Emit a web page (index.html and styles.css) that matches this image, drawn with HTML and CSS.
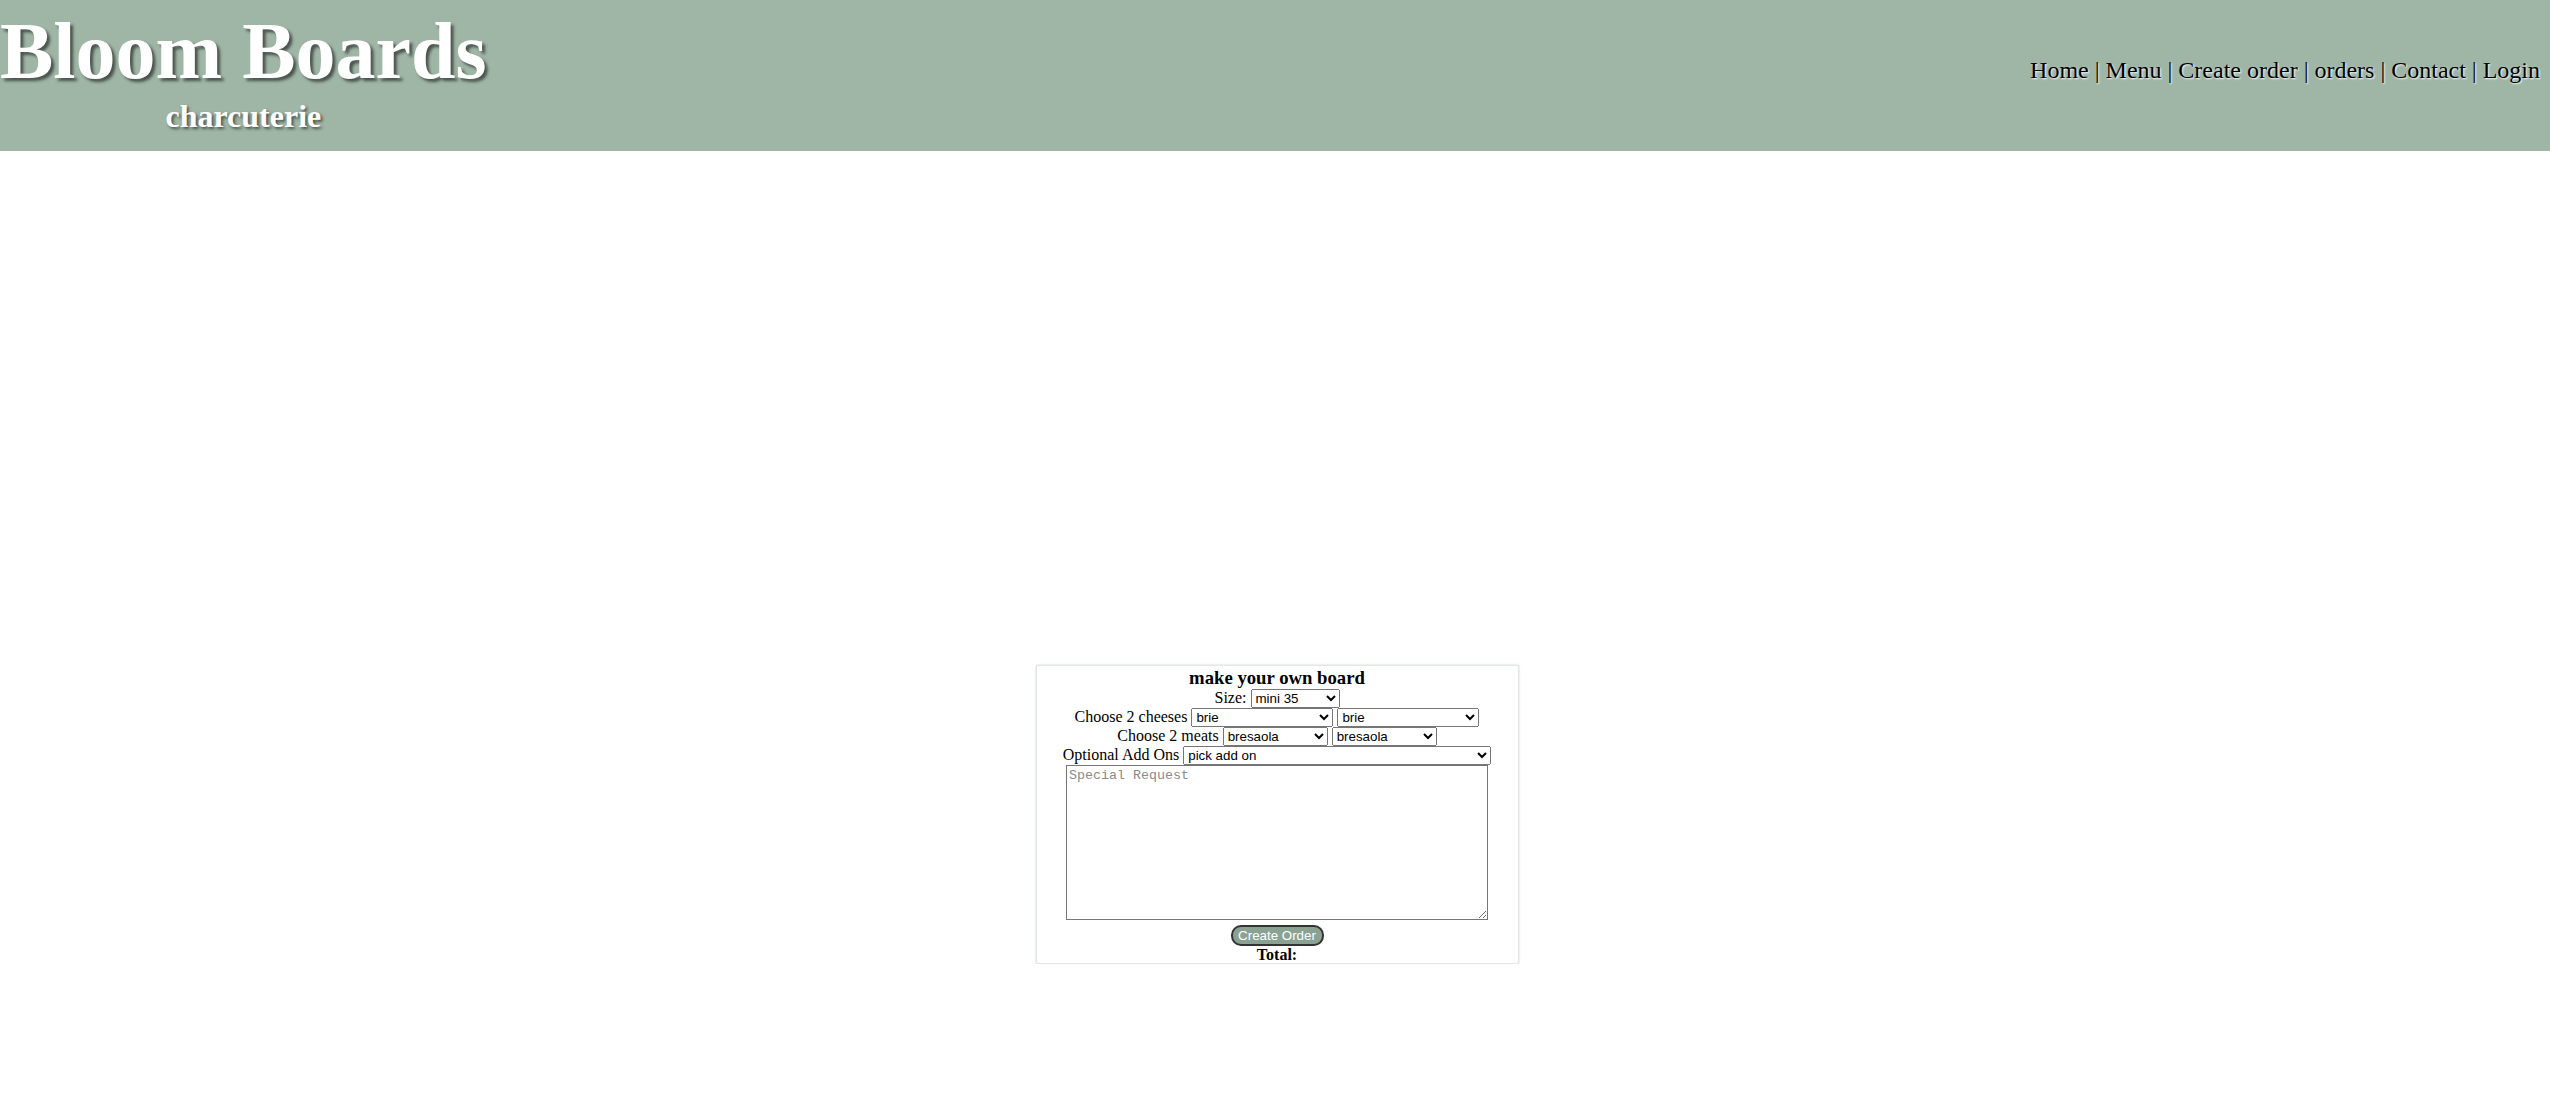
FILE: index.html
```html
<!DOCTYPE html>
<html lang="en">
<head>
<meta charset="utf-8">
<title>Bloom Boards</title>
<link rel="stylesheet" href="styles.css">
</head>
<body>
<header class="site-header">
  <div class="brand">
    <h1 class="brand-title">Bloom Boards</h1>
    <div class="brand-sub">charcuterie</div>
  </div>
  <nav class="nav">Home | Menu | Create order | orders | Contact | Login</nav>
</header>
<main class="main">
  <form class="order-card">
    <h3 class="card-title">make your own board</h3>
    <div class="row">Size: <select class="sel sel-size"><option>mini 35</option></select></div>
    <div class="row">Choose 2 cheeses <select class="sel sel-cheese"><option>brie</option></select> <select class="sel sel-cheese"><option>brie</option></select></div>
    <div class="row">Choose 2 meats <select class="sel sel-meat"><option>bresaola</option></select> <select class="sel sel-meat"><option>bresaola</option></select></div>
    <div class="row">Optional Add Ons <select class="sel sel-addon"><option>pick add on</option></select></div>
    <div class="row"><textarea class="request" placeholder="Special Request"></textarea></div>
    <div class="row"><button type="button" class="btn">Create Order</button></div>
    <div class="total">Total:</div>
  </form>
</main>
</body>
</html>
```

FILE: styles.css
```css
html, body {
  margin: 0;
  padding: 0;
  background: #ffffff;
  font-family: "Liberation Serif", "Times New Roman", serif;
  font-size: 16px;
  color: #000;
}

.site-header {
  display: flex;
  justify-content: space-between;
  align-items: flex-start;
  height: 151px;
  background: #9fb5a6;
}

.brand {
  display: flex;
  flex-direction: column;
  align-items: center;
}

.brand-title {
  margin: 11px 0 0 0;
  font-size: 80px;
  line-height: 1;
  font-weight: bold;
  color: #fff;
  text-shadow: 3px 3px 3px #4a544d;
}

.brand-sub {
  margin-top: 9px;
  font-size: 32px;
  line-height: 1;
  font-weight: bold;
  color: #fff;
  text-shadow: 2px 2px 3px #4a544d;
}

.nav {
  margin-top: 58px;
  padding-right: 10px;
  font-size: 24px;
  line-height: 1;
  color: #000;
  text-shadow: 1px 1px 2px #ffffff;
}

.main {
  display: flex;
  justify-content: center;
  padding-top: 514px;
  padding-left: 4px;
}

.order-card {
  box-sizing: border-box;
  width: 483px;
  height: 299px;
  padding: 1px 0 0 0;
  background: #fff;
  border: 1px solid #e2e6e4;
  box-shadow: 0 0 2px rgba(150, 165, 160, 0.6);
  border-radius: 2px;
  text-align: center;
}

.card-title {
  margin: 0;
  font-size: 18.72px;
  font-weight: bold;
}

.row {
  line-height: 18px;
}

.sel {
  box-sizing: border-box;
  height: 19px;
  font-family: "Liberation Sans", Arial, sans-serif;
  font-size: 13.33px;
  vertical-align: baseline;
}

.sel-size { width: 89px; }
.sel-cheese { width: 142px; }
.sel-meat { width: 105px; }
.sel-addon { width: 308px; }

.request {
  box-sizing: border-box;
  width: 422px;
  height: 155px;
  margin: 0;
  vertical-align: top;
  font-family: "Liberation Mono", "Courier New", monospace;
  font-size: 13.33px;
  border: 1px solid #767676;
  padding: 2px;
}

.request::placeholder {
  color: #8a8a8a;
}

.btn {
  box-sizing: border-box;
  width: 93px;
  height: 21px;
  margin-top: 5px;
  padding: 0;
  background: #8ba293;
  color: #fff;
  font-family: "Liberation Sans", Arial, sans-serif;
  font-size: 13.33px;
  border: 2px solid #333;
  border-radius: 10px;
  vertical-align: top;
}

.total {
  margin-top: 1px;
  font-weight: bold;
  line-height: 16px;
}
```
